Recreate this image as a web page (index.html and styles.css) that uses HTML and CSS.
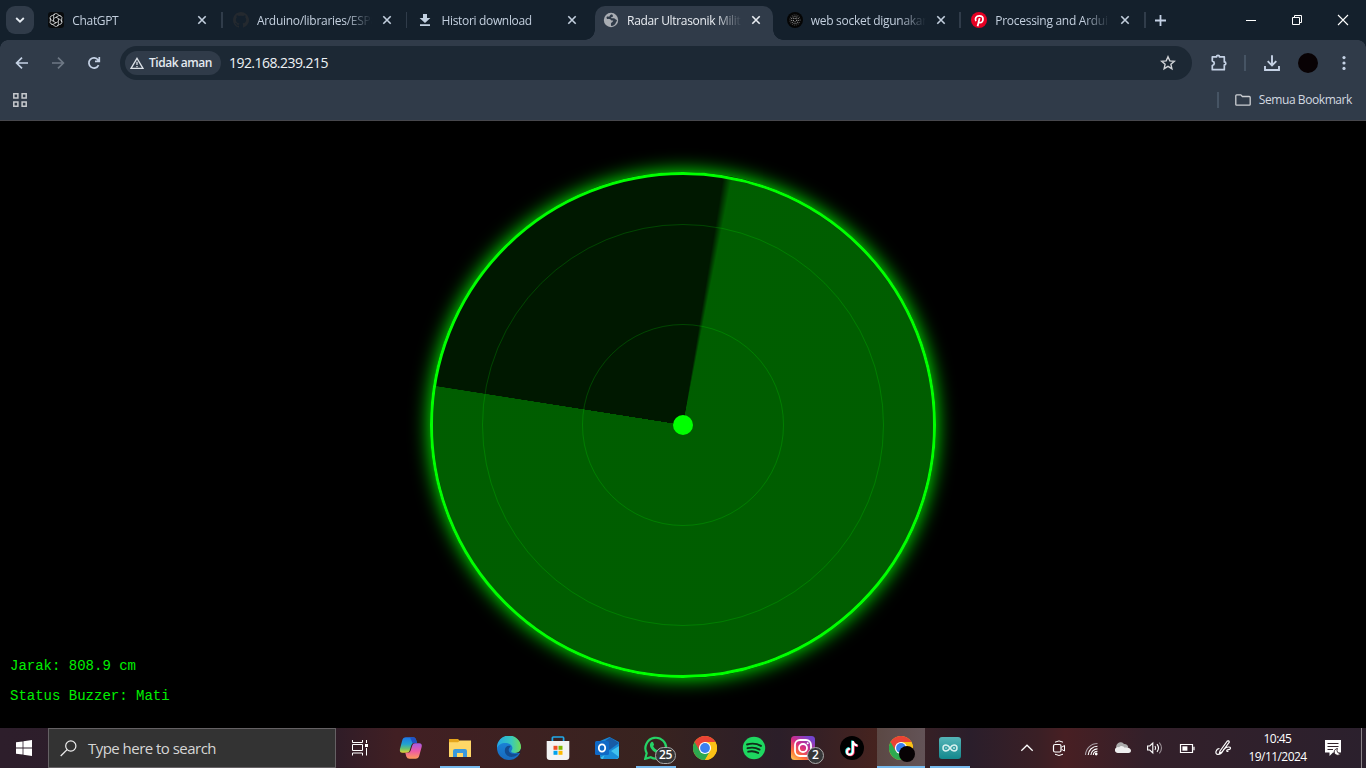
FILE: index.html
```html
<!DOCTYPE html>
<html lang="id">
<head>
<meta charset="utf-8">
<title>Radar Ultrasonik Militer</title>
<link rel="stylesheet" href="styles.css">
</head>
<body>
<svg width="0" height="0" class="defs">
  <defs>
    <symbol id="x" viewBox="0 0 10 10"><path d="M1.3 1.3l7.4 7.4M8.7 1.3L1.3 8.7" stroke="currentColor" stroke-width="1.6" fill="none"/></symbol>
    <symbol id="chrome" viewBox="0 0 24 24">
      <circle cx="12" cy="12" r="12" fill="#fbc116"/>
      <path d="M1.6 6A12 12 0 0 0 12 24L17.2 15 12 12z" fill="#2da94f"/>
      <path d="M22.4 6A12 12 0 0 1 12 24l5.2-9L16 6z" fill="#fbc116"/>
      <path d="M1.6 6L6.8 15 12 6h10.4A12 12 0 0 0 1.6 6z" fill="#ea4335"/>
      <circle cx="12" cy="12" r="6.1" fill="#fff"/><circle cx="12" cy="12" r="4.9" fill="#3a7ff0"/>
    </symbol>
    <linearGradient id="edgeA" x1="0" y1="0" x2="1" y2="0"><stop offset="0" stop-color="#22a7e5"/><stop offset=".6" stop-color="#38c8bc"/><stop offset="1" stop-color="#6fdc55"/></linearGradient>
    <linearGradient id="edgeB" x1="0" y1="0" x2="0" y2="1"><stop offset="0" stop-color="#1b8ade"/><stop offset="1" stop-color="#1769bd"/></linearGradient>
    <linearGradient id="copA" x1="0" y1="0" x2="0" y2="1"><stop offset="0" stop-color="#1d75e8"/><stop offset=".45" stop-color="#21a3cf"/><stop offset=".75" stop-color="#6cc36a"/><stop offset="1" stop-color="#e8d436"/></linearGradient>
    <linearGradient id="copB" x1="0" y1="0" x2="0" y2="1"><stop offset="0" stop-color="#a35be6"/><stop offset=".5" stop-color="#ee5aa5"/><stop offset="1" stop-color="#ff9b58"/></linearGradient>
    <linearGradient id="insta" x1="0" y1="1" x2=".7" y2="0"><stop offset="0" stop-color="#ffd45b"/><stop offset=".28" stop-color="#ff7337"/><stop offset=".6" stop-color="#d62c83"/><stop offset="1" stop-color="#7444cf"/></linearGradient>
    <linearGradient id="ard" x1="0" y1="0" x2="0" y2="1"><stop offset="0" stop-color="#55b5b8"/><stop offset="1" stop-color="#13888d"/></linearGradient>
  </defs>
</svg>

<header class="tabstrip">
  <div class="tabsearch"><svg width="10" height="8" viewBox="0 0 10 8"><path d="M1.2 2l3.8 3.7L8.8 2" fill="none" stroke="#e5ebf2" stroke-width="1.8"/></svg></div>
  <div class="tab">
    <svg class="fav" viewBox="0 0 16 16"><rect width="16" height="16" rx="3" fill="#090b0d"/><g fill="none" stroke="#d7d9da" stroke-width=".8"><path id="petal" d="M8 5.2L5.6 6.6V3.9a2.4 2.4 0 0 1 4.4-1.3L12.6 4.2"/><use href="#petal" transform="rotate(60 8 8)"/><use href="#petal" transform="rotate(120 8 8)"/><use href="#petal" transform="rotate(180 8 8)"/><use href="#petal" transform="rotate(240 8 8)"/><use href="#petal" transform="rotate(300 8 8)"/></g></svg>
    <span class="title short">ChatGPT</span><svg class="close"><use href="#x"/></svg>
  </div>
  <div class="tab">
    <svg class="fav" viewBox="0 0 16 16"><path fill="#24292f" d="M8 0C3.58 0 0 3.58 0 8c0 3.54 2.29 6.53 5.47 7.59.4.07.55-.17.55-.38v-1.5c-2.01.37-2.53-.49-2.69-.94-.09-.23-.48-.94-.82-1.13-.28-.15-.68-.52-.01-.53.63-.01 1.08.58 1.23.82.72 1.21 1.87.87 2.33.66.07-.52.28-.87.51-1.07-1.78-.2-3.64-.89-3.64-3.95 0-.87.31-1.59.82-2.15-.08-.2-.36-1.02.08-2.12 0 0 .67-.21 2.2.82a7.6 7.6 0 0 1 4 0c1.53-1.04 2.2-.82 2.2-.82.44 1.1.16 1.92.08 2.12.51.56.82 1.27.82 2.15 0 3.07-1.87 3.75-3.65 3.95.29.25.54.73.54 1.48v2.2c0 .21.15.46.55.38A8 8 0 0 0 8 0z"/></svg>
    <span class="title">Arduino/libraries/ESP8</span><svg class="close"><use href="#x"/></svg>
  </div>
  <div class="tab">
    <svg class="fav" viewBox="0 0 16 16"><path d="M6 2h4v4h3.4L8 11 2.6 6H6zM3 12.3h10v1.8H3z" fill="#c2d0e0"/></svg>
    <span class="title short">Histori download</span><svg class="close"><use href="#x"/></svg>
  </div>
  <div class="tab active">
    <svg class="fav" viewBox="0 0 16 16"><circle cx="8" cy="8" r="7.2" fill="#a9adb3"/><path d="M9 2.2c-2.4.2-2 2.2-2.8 2.4-.9.2-2.4-.8-2.7.9-.2 1.3 1.5 1.5 3 1.4 1.2-.1 1.3 1.4 2.1 1.5h1.6c-.1 2-2.2 1.6-2.3 3.3 0 1 .2 1.6.3 2.3 2.5-.2 4-1.2 4.6-3.3.3-1.2 1.3-1.5 1.1-2.8-2-.3-1.4-1.3-3.3-1.6-1.3-.1-2.1.2-2.6-.5-.3-.8 1.4-.5 1.9-1.3.3-.6-.1-1.4-.9-2.3z" fill="#303b49"/></svg>
    <span class="title">Radar Ultrasonik Milit</span><svg class="close"><use href="#x"/></svg>
  </div>
  <div class="tab">
    <svg class="fav" viewBox="0 0 16 16"><circle cx="8" cy="8" r="8" fill="#050505"/><g fill="none" stroke="#aaa" stroke-width="1.1" stroke-dasharray="1 1"><circle cx="8" cy="8" r="1.8"/><circle cx="8" cy="8" r="3.6" stroke="#858585"/><circle cx="8" cy="8" r="5.1" stroke="#484848"/></g></svg>
    <span class="title">web socket digunakan</span><svg class="close"><use href="#x"/></svg>
  </div>
  <div class="tab">
    <svg class="fav" viewBox="0 0 16 16"><circle cx="8" cy="8" r="8" fill="#e60023"/><path d="M4.9 9.1C3.7 7 4.9 3.8 8.3 3.8c2.2 0 3.7 1.3 3.7 3.1 0 2.1-1.3 3.8-3 3.8-1 0-1.5-.6-1.5-1.1M8.6 6.1L6.6 14.2" fill="none" stroke="#fff" stroke-width="1.8"/></svg>
    <span class="title">Processing and Ardui</span><svg class="close"><use href="#x"/></svg>
  </div>
  <svg class="plus" viewBox="0 0 11 11"><path d="M5.5 0v11M0 5.5h11" stroke="#c3d0e4" stroke-width="1.8"/></svg>
  <div class="wincontrols">
    <svg viewBox="0 0 12 12"><path d="M1 6.5h10" stroke="#fff"/></svg>
    <svg viewBox="0 0 12 12"><path d="M1.5 3.5h7v7h-7zM3.5 3.5v-2h7v7h-2" fill="none" stroke="#fff"/></svg>
    <svg viewBox="0 0 12 12"><path d="M1 1l10 10M11 1L1 11" stroke="#fff" stroke-width="1.1"/></svg>
  </div>
</header>

<section class="toolbar">
  <div class="navrow">
    <svg class="nav" viewBox="0 0 16 16"><path d="M14 8H3M8 2.6L2.6 8 8 13.4" fill="none" stroke="#c5d2e5" stroke-width="1.7"/></svg>
    <svg class="nav" viewBox="0 0 16 16"><path d="M2 8h11M8 2.6L13.4 8 8 13.4" fill="none" stroke="#6e7885" stroke-width="1.7"/></svg>
    <svg class="nav" viewBox="0 0 16 16"><path d="M12.6 10.1a5.1 5.1 0 1 1-.5-5.2l1 1.3M13.3 2v4.4H9" fill="none" stroke="#c5d2e5" stroke-width="1.7"/></svg>
    <div class="omnibox">
      <div class="chip"><svg width="14" height="12" viewBox="0 0 14 12"><path d="M7 1.3L13 11.3H1z" fill="none" stroke="#dce1e7" stroke-width="1.3"/><path d="M7 4.7v3.4M7 8.9v1.3" stroke="#dce1e7" stroke-width="1.3"/></svg><b>Tidak aman</b></div>
      <span class="url">192.168.239.215</span>
      <svg class="star" viewBox="0 0 16 16"><path d="M8 1.8l1.8 4.1 4.5.4-3.4 3 1 4.4L8 11.4l-3.9 2.3 1-4.4-3.4-3 4.5-.4z" fill="none" stroke="#d0d3d7" stroke-width="1.4"/></svg>
    </div>
    <div class="actions">
      <svg width="18" height="18" viewBox="0 0 18 18"><path d="M2.3 2.9h4.2a1.5 1.5 0 0 1 3 0h4.8v5a1.5 1.5 0 0 1 0 3v4.8H2.3v-4.2q2-.5 2-2.2t-2-2.2z" fill="none" stroke="#c5d2e5" stroke-width="1.7" stroke-linejoin="round"/></svg>
      <i class="vbar"></i>
      <svg width="18" height="18" viewBox="0 0 18 18"><path d="M9 1.2v10M4.7 7.2L9 11.5l4.3-4.3M2 12v4h14v-4" fill="none" stroke="#c5d2e5" stroke-width="1.9"/></svg>
      <i class="avatar"></i>
      <svg width="4" height="16" viewBox="0 0 4 16" fill="#c5d2e5"><circle cx="2" cy="2.6" r="1.6"/><circle cx="2" cy="8" r="1.6"/><circle cx="2" cy="13.4" r="1.6"/></svg>
    </div>
  </div>
  <div class="bookmarks">
    <svg width="14" height="14" viewBox="0 0 14 14"><path d="M.8.8h4.1v4.1H.8zM9.1.8h4.1v4.1H9.1zM.8 9.1h4.1v4.1H.8zM9.1 9.1h4.1v4.1H9.1z" fill="none" stroke="#c6c9cd" stroke-width="1.5"/></svg>
    <i class="vbar"></i>
    <svg class="folder" width="16" height="12" viewBox="0 0 16 12"><path d="M.8 10V1.7q0-.9.9-.9h4.1l1.6 1.7h6.9q.9 0 .9.9V10.4q0 .8-.9.8H1.7q-.9 0-.9-.8z" fill="none" stroke="#cccfd3" stroke-width="1.3"/></svg>
    <span>Semua Bookmark</span>
  </div>
</section>

<main class="page">
  <div class="radar">
    <div class="ring outer"></div>
    <div class="ring inner"></div>
    <div class="sweep"></div>
    <div class="dot"></div>
  </div>
  <div class="info"><p>Jarak: 808.9 cm</p><p>Status Buzzer: Mati</p></div>
</main>

<footer class="taskbar">
  <div class="start"><svg width="16" height="16" viewBox="0 0 16 16"><path d="M0 2.3L6.6 1.4v6.1H0zM7.4 1.3L16 0v7.5H7.4zM0 8.4h6.6v6.2L0 13.7zM7.4 8.4H16V16l-8.6-1.2z" fill="#fff"/></svg></div>
  <div class="search"><svg width="17" height="17" viewBox="0 0 17 17"><circle cx="10.8" cy="6" r="5.1" fill="none" stroke="#eee" stroke-width="1.2"/><path d="M7.1 9.6L.7 16" stroke="#eee" stroke-width="1.3"/></svg><span>Type here to search</span></div>
  <div class="taskview"><svg width="16" height="16" viewBox="0 0 16 16"><path d="M.5 0v2.5h10V0M.5 15.5V13h10v2.5M.5 4.5h10v6H.5zM14.5 0v3M14.5 8v7.5" fill="none" stroke="#fff"/><path d="M13 4h3v3h-3z" fill="#fff"/></svg></div>
  <div class="apps">
    <div class="app"><svg viewBox="0 0 24 24"><path d="M7 1.2h7q2.4 0 3 2.3L18 7h-3q-2 0-2.6 2L10.5 15q-.5 1.8-2.5 1.8H3.5Q.4 16.800.9 13.2L3.2 4.5Q4 1.200 7 1.200z" fill="url(#copA)"/><path d="M11 1.200h3q2.400 0 3 2.300L18 7h-4.500z" fill="#2052c6"/><path d="M16.500 22.800h-6q-2.400 0-3.200-2.300L6.300 16.800H9q2 0 2.600-2L13.500 9q.5-1.800 2.500-1.800h4.200q3.200 0 2.500 3.600l-2.400 8.700q-.8 3.300-3.800 3.300z" fill="url(#copB)"/></svg></div>
    <div class="app run"><svg viewBox="0 0 24 24"><path d="M1 3h9l2 2h11v6H1z" fill="#e5a51b"/><path d="M1 6.2h9l2-1.700h11V21H1z" fill="#ffd767"/><path d="M5 21v-6q0-2 2-2h10q2 0 2 2v6h-4v-4H9v4z" fill="#3a99dd"/></svg></div>
    <div class="app"><svg viewBox="0 0 24 24"><circle cx="12" cy="12" r="12" fill="url(#edgeB)"/><path d="M0 12A12 12 0 0 1 24 11c.2 4-3 6-6 6-2.600 0-3.800-.8-3.800-1.700 0-.8 1.300-1.200 1.200-3.500C15.200 8.800 12 7 8.500 7 4.300 7 1 9 0 12z" fill="url(#edgeA)"/><path d="M24 12.500c-.8 3-3.500 4.500-6 4.500h5l2 1z" fill="#31212a"/><path d="M13.800 10c-3-1-6 .7-6 4.600 0 4.400 4 7 8.500 6.200 2.800-.5 4.600-2 5.600-3.700-3.500 1.600-9.900 1.200-10.200-2.800-.1-1.800 1-2.900 2.100-4.300z" fill="#124c91"/></svg></div>
    <div class="app"><svg viewBox="0 0 24 24"><path d="M6.400 7V2q0-1 1-1h9.200q1 0 1 1v5" fill="none" stroke="#20a9e9" stroke-width="1.7"/><path d="M.7 5h22.600v16q0 3-3 3H3.700q-3 0-3-3z" fill="#f3f3f3"/><path d="M7.500 9.800h4v4h-4z" fill="#ef4e25"/><path d="M12.500 9.800h4v4h-4z" fill="#7eb800"/><path d="M7.500 14.800h4v4h-4z" fill="#00a2ed"/><path d="M12.500 14.800h4v4h-4z" fill="#fdb900"/></svg></div>
    <div class="app"><svg viewBox="0 0 24 24"><path d="M5 5L14.500 1 24 6v14q0 3-3 3H8q-3 0-3-3z" fill="#1689d8"/><path d="M10 5l5-3.500L24 7 13 15z" fill="#185ba5"/><path d="M5 22L24 10v10q0 3-3 3H7z" fill="#41c2ee"/><path d="M12 12l12 9q-1 2-4 2H8z" fill="#1a8fda"/><rect y="5" width="14" height="14" rx="1.5" fill="#0f69c6"/><ellipse cx="7" cy="12" rx="3.2" ry="3.7" fill="none" stroke="#fff" stroke-width="1.8"/></svg></div>
    <div class="app run"><svg viewBox="0 0 24 24"><path d="M1.200 22.800l1.500-5.600A10.400 10.400 0 1 1 6.800 21.300z" fill="none" stroke="#25d366" stroke-width="2.2"/><path d="M7.200 6.200C8 5.500 8.800 5.600 9.100 6.300l.9 2.100c.2.6-.9 1.500-.8 1.900 1 2 2.300 3.200 4.500 4.100.5.1 1.300-1.500 1.800-1.300l2.300 1.200c.6.5-.2 2.600-1.900 3-4 1-10-4.300-10-8.400 0-1.100.5-2.100 1.300-2.700z" fill="#25d366"/></svg><span class="badge wide">25</span></div>
    <div class="app"><svg viewBox="0 0 24 24"><use href="#chrome"/></svg></div>
    <div class="app"><svg viewBox="0 0 24 24"><circle cx="12" cy="12" r="11.2" fill="#1ed760"/><path d="M5 8.500c5-1.500 10-.9 14 1.400M5.500 12.200c4.300-1.100 8.600-.6 12.100 1.400M6.200 15.700c3.500-.9 7-.5 10 1.200" fill="none" stroke="#102c1a" stroke-width="1.9" stroke-linecap="round"/></svg></div>
    <div class="app"><svg viewBox="0 0 24 24"><rect width="24" height="24" rx="3.5" fill="url(#insta)"/><rect x="4" y="4" width="16" height="16" rx="5" fill="none" stroke="#fff" stroke-width="1.8"/><circle cx="12" cy="12" r="4" fill="none" stroke="#fff" stroke-width="1.8"/><circle cx="16.7" cy="7.3" r="1" fill="#fff"/></svg><span class="badge">2</span></div>
    <div class="app"><svg viewBox="0 0 24 24"><circle cx="12" cy="12" r="12" fill="#000"/><g fill="none" stroke-width="2.2"><path d="M12.200 4.500v10.700a3 3 0 1 1-3-3M12.200 5c.5 2.700 2 3.700 4.500 4" stroke="#25e5df"/><path d="M13.600 5.500v10.700a3 3 0 1 1-3-3M13.600 6c.5 2.700 2 3.700 4.500 4" stroke="#fe2858"/><path d="M12.900 5v10.700a3 3 0 1 1-3-3M12.900 5.500c.5 2.700 2 3.700 4.500 4" stroke="#fff" stroke-width="2"/></g></svg></div>
    <div class="app current"><svg viewBox="0 0 24 24"><use href="#chrome"/></svg><i class="profile"></i></div>
    <div class="app run"><svg viewBox="0 0 24 24"><rect x="1" y="1" width="22" height="22" rx="3" fill="url(#ard)"/><path d="M12 12c-1.300-2-2.300-3-4-3a3 3 0 0 0 0 6c1.700 0 2.700-1 4-3s2.300-3 4-3a3 3 0 0 1 0 6c-1.700 0-2.700-1-4-3z" fill="none" stroke="#d7f0ee" stroke-width="1.5"/><path d="M7 12h2M15 12h2M16 11v2" stroke="#d7f0ee" stroke-width=".8"/></svg></div>
  </div>
  <div class="tray">
    <svg viewBox="0 0 16 16"><path d="M2.300 10.800L8 5.200l5.700 5.600" fill="none" stroke="#fff" stroke-width="1.2"/></svg>
    <svg viewBox="0 0 16 16"><rect x="2.5" y="4.5" width="7.5" height="7.5" rx="1.5" fill="none" stroke="#fff" stroke-width="1.2"/><path d="M10.500 7.300l3-1.800v5.500l-3-1.800M4 2.200Q8-.4 12 2.200M4 14.200q4 2.600 8 0" fill="none" stroke="#fff"/></svg>
    <svg viewBox="0 0 16 16"><g fill="none" stroke="#fff" stroke-width="1.1"><path d="M2.500 15A12 12 0 0 1 14.500 3.500" stroke="#aaa0a7"/><path d="M5.200 15A9.300 9.300 0 0 1 14.500 6.200M7.900 15A6.600 6.600 0 0 1 14.500 8.900M10.300 15A4.200 4.200 0 0 1 14.500 11.300"/></g><circle cx="13.2" cy="14" r="1.4" fill="#fff"/></svg>
    <svg viewBox="0 0 16 16"><path d="M2 9.200A4.200 4.200 0 0 1 9 4.100c2.300-.2 4.200 1.300 4.300 3.500L9 10z" fill="#aaa"/><path d="M3 13a3 3 0 1 1 1-5.800C6 5 8.500 6 9.600 7.700 12 7 16 8 16 10.500c0 1.800-1.300 2.500-2.500 2.500z" fill="#eee"/></svg>
    <svg viewBox="0 0 16 16"><path d="M.6 6h2.200l3-3v10l-3-3H.6z" fill="none" stroke="#fff" stroke-width="1.1"/><path d="M8 6q1.300 2 0 4M10 4.200q3 3.800 0 7.600" fill="none" stroke="#fff" stroke-width="1.1"/><path d="M12.300 2.600q4.400 5.400 0 10.800" fill="none" stroke="#9a9096" stroke-width="1.1"/></svg>
    <svg viewBox="0 0 16 16"><path d="M1.500 4.500h12v8h-12zM15 6.800v3.400" fill="none" stroke="#fff" stroke-width="1.2"/><path d="M3.400 6.300h5v4.400h-5z" fill="#fff"/></svg>
    <svg class="pen" viewBox="0 0 16 16"><path d="M5 11L12.200 1.100q1.700-.9 2.100 1L7 12l-2.600 1.600zM4.500 8.500C1 8.500-.7 14.400 3 14.400c4 0 3.700-2.300 6.200-5.400C11.500 6.400 16 6.400 15.400 8.500c-.5 1.600-4 .6-3.600 2.500q.4.8 1.600.3" fill="none" stroke="#fff" stroke-width="1.2"/></svg>
    <div class="clock"><span>10:45</span><span>19/11/2024</span></div>
    <svg class="notice" viewBox="0 0 16 16"><path d="M0 0h16v12.500H8L4.500 16v-3.500H0z" fill="#fff"/><path d="M2.500 3.500h11M2.500 6.500h11M2.500 9.500H8" stroke="#33242c"/><path d="M12.500 8.500a3.400 3.400 0 1 0 3 5.200 3.400 3.400 0 0 1-3-5.200z" fill="#fff" stroke="#33242c" stroke-width=".9"/></svg>
    <i class="peek"></i>
  </div>
</footer>
</body>
</html>
```

FILE: styles.css
```css
* { box-sizing: border-box; }
body { margin: 0; width: 1366px; height: 768px; overflow: hidden; background: #000; display: flex; flex-direction: column; font-family: "Open Sans", "Noto Sans", sans-serif; }
svg { display: block; flex: none; }
i { display: block; flex: none; }
.defs { position: absolute; }

.tabstrip { height: 40px; flex: none; display: flex; align-items: center; background: #14202c; padding-left: 6px; }
.tabsearch { width: 28px; height: 28px; border-radius: 9px; background: #303b49; display: flex; align-items: center; justify-content: center; margin-right: 4px; }
.tab { width: 184.6px; height: 40px; flex: none; display: flex; align-items: center; padding-left: 10.3px; color: #c3cfde; position: relative; }
.tab::after { content: ""; width: 2px; height: 16px; background: #303c4a; margin-left: 13.5px; }
.tab:has(+ .active)::after { visibility: hidden; }
.fav { width: 16px; height: 16px; margin-right: 8px; }
.title { width: 124px; flex: none; height: 20px; font-size: 12px; line-height: 21px; letter-spacing: -0.28px; white-space: nowrap; margin-right: 1.2px; -webkit-mask-image: linear-gradient(90deg, #000 88px, transparent 115px); mask-image: linear-gradient(90deg, #000 88px, transparent 115px); }
.short { letter-spacing: -0.33px; }
.close { width: 10px; height: 10px; }
.active { color: #e9edf2; }
.active::before { content: ""; position: absolute; left: 3px; top: 6px; width: 178px; height: 34px; background: #303b49; border-radius: 10px 10px 0 0; }
.active > * { position: relative; }
.active .fav { margin-left: 1px; }
.active .title { letter-spacing: -0.33px; margin-right: 0; }
.active::after { position: absolute; left: -7px; top: 30px; margin: 0; width: 198px; height: 10px; background: radial-gradient(circle at 0 0, transparent 9.5px, #303b49 10px) left / 10px 10px no-repeat, radial-gradient(circle at 100% 0, transparent 9.5px, #303b49 10px) right / 10px 10px no-repeat; }
.plus { width: 11px; height: 11px; margin-left: 9.5px; }
.wincontrols { display: flex; gap: 34px; margin: 0 17px 0 auto; }
.wincontrols svg { width: 12px; height: 12px; }

.toolbar { height: 81px; flex: none; background: radial-gradient(circle at 8px 8px, #303b49 7.5px, #14202c 8px) left top / 8px 8px no-repeat, radial-gradient(circle at 0 8px, #303b49 7.5px, #14202c 8px) right top / 8px 8px no-repeat, #303b49; border-bottom: 1px solid #47474c; }
.navrow { height: 46px; display: flex; align-items: center; padding-left: 14px; }
.nav { width: 16px; height: 16px; margin-right: 20px; }
.nav:nth-child(3) { margin-right: 18px; }
.omnibox { width: 1072px; height: 34px; flex: none; border-radius: 17px; background: #1c2834; display: flex; align-items: center; padding: 0 16px 0 5px; }
.chip { width: 96px; height: 24px; border-radius: 12px; background: #303b49; color: #e4e9ef; display: flex; align-items: center; gap: 5px; padding-left: 5px; font-size: 12px; letter-spacing: -0.45px; white-space: nowrap; }
.chip b { font-weight: 600; margin-top: -2px; }
.url { margin: -2px 0 0 8px; color: #eef2f5; font-size: 14px; letter-spacing: -0.55px; }
.star { width: 16px; height: 16px; margin-left: auto; }
.actions { display: flex; align-items: center; margin-left: 18px; }
.vbar { width: 2px; height: 16px; background: #465464; }
.actions .vbar { margin: 0 17px 0 16px; }
.avatar { width: 20px; height: 20px; border-radius: 50%; background: #080204; margin: 0 24px 0 17px; }
.actions svg:last-child { margin-right: 20px; }
.bookmarks { height: 28px; display: flex; align-items: center; padding: 0 14px 0 13px; color: #d3d9e0; font-size: 12px; letter-spacing: -0.42px; }
.bookmarks span { margin-top: -1px; }
.bookmarks .vbar { margin-left: auto; }
.folder { margin: 0 8px 0 16px; }

.page { height: 607px; flex: none; background: #000; display: flex; justify-content: center; align-items: flex-start; padding-top: 51px; position: relative; }
.radar { width: 506px; height: 506px; flex: none; border: 3px solid #0f0; border-radius: 50%; background: rgba(0,255,0,.095); box-shadow: 0 0 20px #0f0; display: grid; place-items: center; }
.radar > * { grid-area: 1 / 1; border-radius: 50%; }
.ring { border: 1px solid rgba(0,255,0,.2); }
.outer { width: 402px; height: 402px; }
.inner { width: 202px; height: 202px; }
.sweep { width: 500px; height: 500px; background: conic-gradient(from 279deg, transparent .1deg, transparent 90.2deg, rgba(0,255,0,.3) 92.2deg, rgba(0,255,0,.3) 359.9deg, transparent 360deg); }
.dot { width: 20px; height: 20px; background: #0f0; }
.info { position: absolute; left: 10px; bottom: 24px; color: #00f000; font: 14px/16px "Liberation Mono", monospace; }
.info p { margin: 14px 0 0; }

.taskbar { height: 40px; flex: none; display: flex; background: linear-gradient(90deg, #2d1e2b 0%, #2d1c28 24%, #411f23 29%, #38231f 48%, #2b1e29 57%, #45231f 64%, #2a1e2b 71%, #3a1f25 76%, #481f23 78%, #33202a 84%, #2b202d 100%); color: #fff; }
.start { width: 48px; display: flex; align-items: center; justify-content: center; }
.search { width: 288px; height: 40px; background: #333; border: 1px solid #656164; display: flex; align-items: center; gap: 11px; padding-left: 11px; color: #d6d6d6; font-size: 15px; letter-spacing: -0.53px; }
.taskview { width: 51px; display: flex; align-items: center; padding-left: 16px; }
.apps { display: flex; gap: 1px; }
.app { width: 48px; height: 40px; display: flex; align-items: center; justify-content: center; position: relative; }
.app > svg { width: 24px; height: 24px; }
.run::after { content: ""; position: absolute; left: 4px; bottom: 0; width: 40px; height: 2px; background: #76b9ed; }
.current { background: linear-gradient(90deg, #5b4844, #635357); border-bottom: 2px solid #76b9ed; padding-top: 2px; }
.badge { position: absolute; left: 28px; top: 19px; width: 17px; height: 17px; border: 1px solid #aaa; border-radius: 9px; background: #353638; color: #fff; font-size: 12px; font-weight: 600; line-height: 14px; text-align: center; }
.badge.wide { left: 23px; width: 21px; letter-spacing: -0.3px; }
.profile { position: absolute; left: 22px; top: 18px; width: 16px; height: 16px; border-radius: 50%; background: #070204; }
.tray { margin-left: auto; display: flex; align-items: center; }
.tray svg { width: 16px; height: 16px; margin-right: 16px; }
.tray .pen { margin: 0 18px 0 4px; }
.clock { width: 60px; display: flex; flex-direction: column; align-items: center; font-size: 12px; line-height: 18px; letter-spacing: -0.55px; padding-right: 3px; margin-top: -1px; white-space: nowrap; }
.tray .notice { margin: 0 20px 0 16px; }
.peek { width: 1px; height: 40px; background: #8a8388; margin-right: 4px; }
```
